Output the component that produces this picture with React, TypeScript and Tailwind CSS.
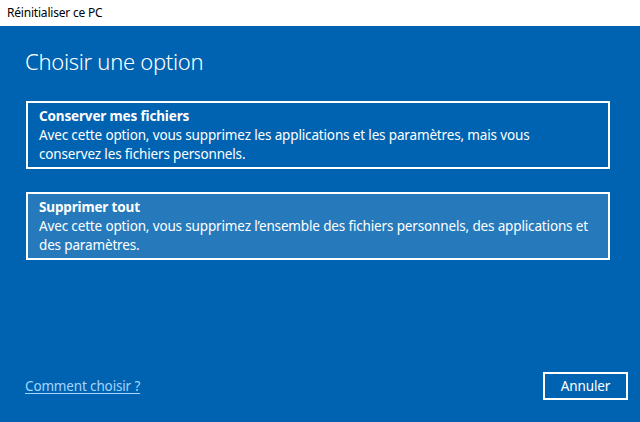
const options = [
  {
    title: "Conserver mes fichiers",
    text: "Avec cette option, vous supprimez les applications et les paramètres, mais vous conservez les fichiers personnels.",
    hover: false,
  },
  {
    title: "Supprimer tout",
    text: "Avec cette option, vous supprimez l’ensemble des fichiers personnels, des applications et des paramètres.",
    hover: true,
  },
];

export default function App() {
  return (
    <div className="w-[640px] h-[422px] flex flex-col bg-[#0063b1] text-white font-['Noto_Sans',sans-serif] overflow-hidden">
      <div className="h-[26px] bg-white text-black text-[12px] tracking-[-0.2px] flex items-center px-[7px] shrink-0">
        Réinitialiser ce PC
      </div>

      <div className="flex-1 flex flex-col px-[25px]">
        <h1 className="mt-[20px] text-[22px] font-light leading-[30px] tracking-[-0.3px]">Choisir une option</h1>

        <div className="mt-[25px] flex flex-col gap-[23px] w-[584px] ml-[1px]">
          {options.map((o) => (
            <div
              key={o.title}
              className={
                "border-2 border-white px-[11px] pt-[4px] pb-[3px] text-[13.5px] leading-[19px] tracking-[-0.15px] " +
                (o.hover ? "bg-[#267abc]" : "")
              }
            >
              <div className="font-bold">{o.title}</div>
              <div className="pr-[4px]">{o.text}</div>
            </div>
          ))}
        </div>

        <div className="mt-auto mb-[22px] flex items-center justify-between">
          <a className="text-[13.5px] tracking-[-0.15px] text-[#a6d4ff] underline underline-offset-2 cursor-pointer">Comment choisir ?</a>
          <button className="w-[85px] h-[28px] border-2 border-white text-[13.5px] tracking-[-0.15px] mr-[-13px]">Annuler</button>
        </div>
      </div>
    </div>
  );
}
